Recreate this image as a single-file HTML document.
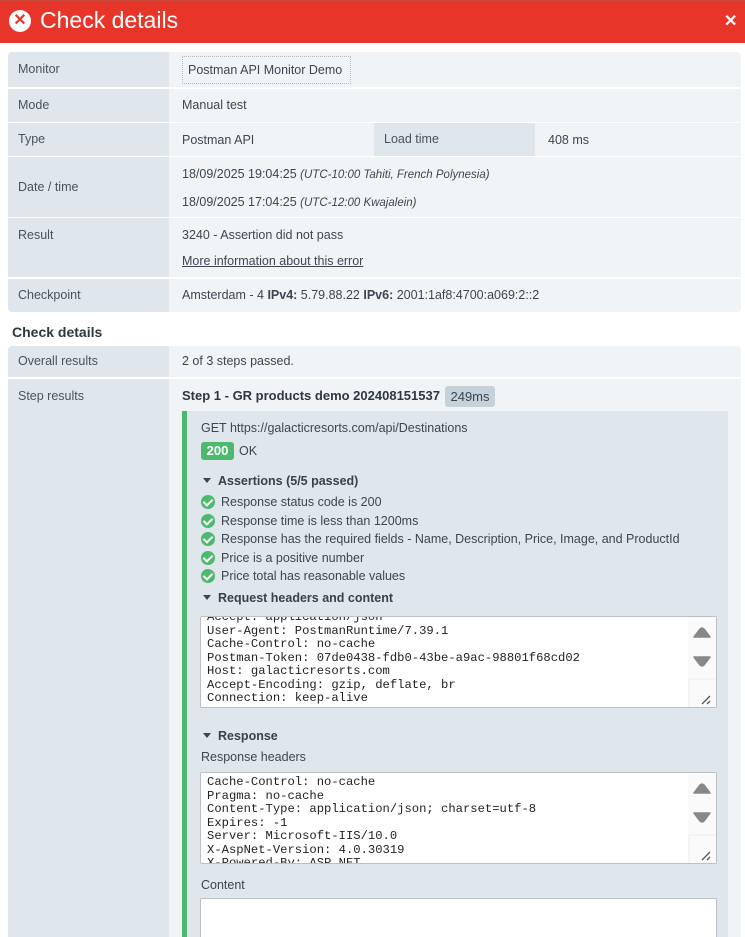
<!DOCTYPE html>
<html><head><meta charset="utf-8"><style>
*{box-sizing:border-box;margin:0;padding:0}
html,body{width:745px;height:937px;overflow:hidden}
body{background:#fff;font-family:"Liberation Sans",sans-serif;font-size:12.5px;color:#3d4650;position:relative}
.a{position:absolute}
.hdr{left:0;top:0;width:745px;height:43px;background:#e8352a;border-top:1px solid #c9463c}
.lab{background:#dfe6ec;color:#4a535c;padding-left:10px}
.val{background:#f0f4f7}
.mono{font-family:"Liberation Mono",monospace;font-size:12.2px;line-height:13.5px;color:#222;white-space:pre}
.ta{background:#fff;border:1px solid #b9c0c7;border-radius:2px;overflow:hidden}
.sb{position:absolute;right:0;top:0;width:28px;height:100%;background:#fafafa}
.ck{display:inline-block;width:14px;height:14px;border-radius:50%;background:#4cb96e;vertical-align:-3px;margin-right:6px;position:relative}
.ck:after{content:"";position:absolute;left:4px;top:2px;width:4px;height:7px;border:solid #fff;border-width:0 2px 2px 0;transform:rotate(45deg)}
.tri{display:inline-block;width:0;height:0;border-left:4px solid transparent;border-right:4px solid transparent;border-top:5px solid #3d4650;vertical-align:2px;margin-right:7px}
b{font-weight:bold}
</style></head><body>
<div class="a hdr"></div>
<div class="a" style="left:9px;top:10px;width:22px;height:22px;border-radius:50%;background:#fff"></div>
<div class="a" style="left:13px;top:13px;color:#e8352a;font-weight:bold;font-size:16px;line-height:16px;width:14px;text-align:center">✕</div>
<div class="a" style="left:40px;top:7px;color:#fff;font-size:23px">Check details</div>
<div class="a" style="left:724px;top:11px;color:#fff;font-size:16px;font-weight:bold">✕</div>

<div class="a lab" style="left:8px;top:52px;width:161px;height:35px;line-height:34px;border-radius:4px 0 0 0">Monitor</div>
<div class="a val" style="left:169px;top:52px;width:572px;height:35px;border-radius:0 4px 0 0"></div>
<div class="a" style="left:182px;top:56px;width:169px;height:28px;border:1px dotted #bbb;line-height:26px;padding-left:5px">Postman API Monitor Demo</div>
<div class="a lab" style="left:8px;top:89px;width:161px;height:33px;line-height:32px">Mode</div>
<div class="a val" style="left:169px;top:89px;width:572px;height:33px;line-height:32px;padding-left:13px">Manual test</div>
<div class="a lab" style="left:8px;top:123px;width:161px;height:33px;line-height:32px">Type</div>
<div class="a val" style="left:169px;top:123px;width:572px;height:33px;line-height:34px;padding-left:13px">Postman API</div>
<div class="a lab" style="left:374px;top:123px;width:161px;height:33px;line-height:32px">Load time</div>
<div class="a" style="left:548px;top:123px;line-height:34px">408 ms</div>
<div class="a lab" style="left:8px;top:157px;width:161px;height:60px;line-height:60px">Date / time</div>
<div class="a val" style="left:169px;top:157px;width:572px;height:60px;padding-left:13px;line-height:27px;padding-top:4px">18/09/2025 19:04:25 <i style="font-size:11.5px">(UTC-10:00 Tahiti, French Polynesia)</i><br>18/09/2025 17:04:25 <i style="font-size:11.5px">(UTC-12:00 Kwajalein)</i></div>
<div class="a lab" style="left:8px;top:218px;width:161px;height:59px;line-height:34px">Result</div>
<div class="a val" style="left:169px;top:218px;width:572px;height:59px;padding-left:13px;line-height:26px;padding-top:4px">3240 - Assertion did not pass<br><u>More information about this error</u></div>
<div class="a lab" style="left:8px;top:279px;width:161px;height:33px;line-height:32px;border-radius:0 0 0 4px">Checkpoint</div>
<div class="a val" style="left:169px;top:279px;width:572px;height:33px;line-height:33px;padding-left:13px;border-radius:0 0 4px 0">Amsterdam - 4 <b>IPv4:</b> 5.79.88.22 <b>IPv6:</b> 2001:1af8:4700:a069:2::2</div>

<div class="a" style="left:12px;top:324px;font-weight:bold;font-size:14px;color:#2f3740">Check details</div>

<div class="a lab" style="left:8px;top:346px;width:161px;height:31px;line-height:30px;border-radius:4px 0 0 0">Overall results</div>
<div class="a val" style="left:169px;top:346px;width:572px;height:31px;line-height:31px;padding-left:13px;border-radius:0 4px 0 0">2 of 3 steps passed.</div>
<div class="a lab" style="left:8px;top:379px;width:161px;height:558px;line-height:34px">Step results</div>
<div class="a val" style="left:169px;top:379px;width:572px;height:558px"></div>
<div class="a" style="left:182px;top:388px;font-weight:bold;font-size:13px;color:#2f3740">Step 1 - GR products demo 202408151537</div>
<div class="a" style="left:445px;top:386px;width:50px;height:21px;background:#c5d2db;border-radius:3px;line-height:21px;text-align:center;font-size:13px">249ms</div>

<div class="a" style="left:182px;top:411px;width:546px;height:526px;background:#dfe6ec;border-left:5px solid #4cb96e"></div>
<div class="a" style="left:201px;top:421px">GET https://galacticresorts.com/api/Destinations</div>
<div class="a" style="left:201px;top:442px;width:33px;height:18px;background:#4cb96e;border-radius:3px;color:#fff;font-weight:bold;text-align:center;line-height:18px;font-size:13px">200</div>
<div class="a" style="left:239px;top:444px">OK</div>
<div class="a" style="left:203px;top:474px;font-weight:bold;color:#3a4148"><span class="tri"></span>Assertions (5/5 passed)</div>
<div class="a" style="left:201px;top:493px;line-height:18.5px">
<div><span class="ck"></span>Response status code is 200</div>
<div><span class="ck"></span>Response time is less than 1200ms</div>
<div><span class="ck"></span>Response has the required fields - Name, Description, Price, Image, and ProductId</div>
<div><span class="ck"></span>Price is a positive number</div>
<div><span class="ck"></span>Price total has reasonable values</div>
</div>
<div class="a" style="left:203px;top:591px;font-weight:bold;color:#3a4148"><span class="tri"></span>Request headers and content</div>

<div class="a ta" style="left:200px;top:616px;width:517px;height:92px">
<div class="mono a" style="left:6px;top:-6px">Accept: application/json
User-Agent: PostmanRuntime/7.39.1
Cache-Control: no-cache
Postman-Token: 07de0438-fdb0-43be-a9ac-98801f68cd02
Host: galacticresorts.com
Accept-Encoding: gzip, deflate, br
Connection: keep-alive</div>
<div class="sb"><svg width="28" height="91"><path d="M6 20 L12 12 Q14 10 16 12 L22 20Z" fill="#888" stroke="#888" stroke-linejoin="round" stroke-width="1.5"/><path d="M6 40 L22 40 L16 48 Q14 50 12 48Z" fill="#888" stroke="#888" stroke-linejoin="round" stroke-width="1.5"/><path d="M1 62 H28 M1 62 V91" stroke="#eee"/><path d="M14 87 L22 79 M19 87 L22 84" stroke="#555" stroke-width="1.3"/></svg></div>
</div>

<div class="a" style="left:203px;top:729px;font-weight:bold;color:#3a4148"><span class="tri"></span>Response</div>
<div class="a" style="left:201px;top:750px">Response headers</div>
<div class="a ta" style="left:200px;top:772px;width:517px;height:92px">
<div class="mono a" style="left:6px;top:3px">Cache-Control: no-cache
Pragma: no-cache
Content-Type: application/json; charset=utf-8
Expires: -1
Server: Microsoft-IIS/10.0
X-AspNet-Version: 4.0.30319
X-Powered-By: ASP.NET</div>
<div class="sb"><svg width="28" height="91"><path d="M6 20 L12 12 Q14 10 16 12 L22 20Z" fill="#888" stroke="#888" stroke-linejoin="round" stroke-width="1.5"/><path d="M6 40 L22 40 L16 48 Q14 50 12 48Z" fill="#888" stroke="#888" stroke-linejoin="round" stroke-width="1.5"/><path d="M1 62 H28 M1 62 V91" stroke="#eee"/><path d="M14 87 L22 79 M19 87 L22 84" stroke="#555" stroke-width="1.3"/></svg></div>
</div>
<div class="a" style="left:201px;top:878px">Content</div>
<div class="a ta" style="left:200px;top:898px;width:517px;height:39px;border-bottom:none;border-radius:2px 2px 0 0"></div>
</body></html>
